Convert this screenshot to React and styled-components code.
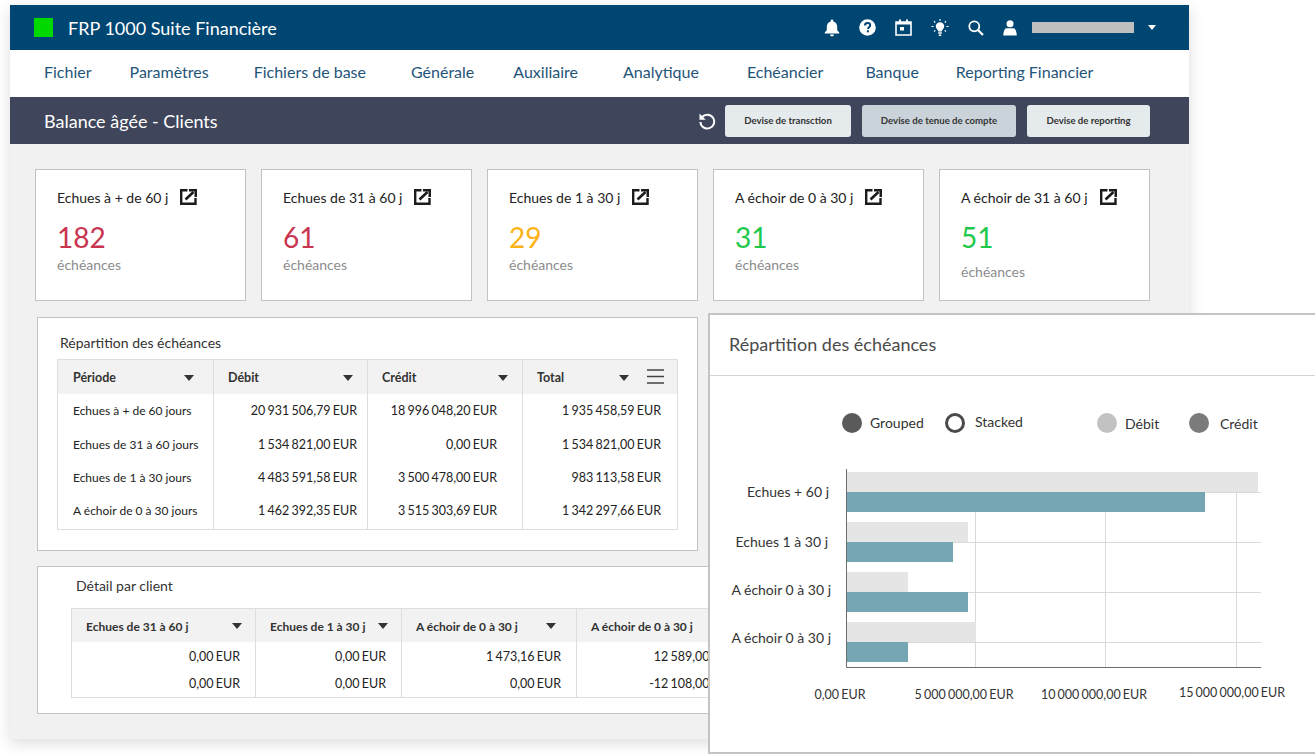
import styled, { createGlobalStyle } from 'styled-components';

const GlobalStyle = createGlobalStyle`
  html,
  body {
    margin: 0;
    padding: 0;
    background: #ffffff;
  }
  body {
    font-family: 'Lato', 'Liberation Sans', sans-serif;
    overflow: hidden;
  }
`;

const MENU = [
  ['Fichier', 38],
  ['Paramètres', 45],
  ['Fichiers de base', 45],
  ['Générale', 39],
  ['Auxiliaire', 45],
  ['Analytique', 48],
  ['Echéancier', 42],
  ['Banque', 37],
  ['Reporting Financier', 0],
];

const CARDS = [
  { title: 'Echues à + de 60 j', value: '182', color: '#c9344f' },
  { title: 'Echues de 31 à 60 j', value: '61', color: '#c9344f' },
  { title: 'Echues de 1 à 30 j', value: '29', color: '#fcb316' },
  { title: 'A échoir de 0 à 30 j', value: '31', color: '#1dc94a' },
  { title: 'A échoir de 31 à 60 j', value: '51', color: '#1dc94a', low: true },
];

const SUMMARY_ROWS = [
  ['Echues à + de 60 jours', '20 931 506,79 EUR', '18 996 048,20 EUR', '1 935 458,59 EUR'],
  ['Echues de 31 à 60 jours', '1 534 821,00 EUR', '0,00 EUR', '1 534 821,00 EUR'],
  ['Echues de 1 à 30 jours', '4 483 591,58 EUR', '3 500 478,00 EUR', '983 113,58 EUR'],
  ['A échoir de 0 à 30 jours', '1 462 392,35 EUR', '3 515 303,69 EUR', '1 342 297,66 EUR'],
];

const DETAIL_COLUMNS = [
  { label: 'Echues de 31 à 60 j', width: 184, end: 13 },
  { label: 'Echues de 1 à 30 j', width: 146, end: 13 },
  { label: 'A échoir de 0 à 30 j', width: 175, end: 20 },
  { label: 'A échoir de 0 à 30 j', width: 175, end: 20 },
];

const DETAIL_ROWS = [
  ['0,00 EUR', '0,00 EUR', '1 473,16 EUR', '12 589,00 EUR'],
  ['0,00 EUR', '0,00 EUR', '0,00 EUR', '-12 108,00 EUR'],
];

const BARS = [
  { label: 'Echues + 60 j', labelX: 829, labelY: 497, y: 472, debit: 411, credit: 358 },
  { label: 'Echues 1 à 30 j', labelX: 828, labelY: 547, y: 522, debit: 121, credit: 106 },
  { label: 'A échoir 0 à 30 j', labelX: 831, labelY: 595, y: 572, debit: 61, credit: 121 },
  { label: 'A échoir 0 à 30 j', labelX: 831, labelY: 643, y: 622, debit: 129, credit: 61 },
];

const TICKS = [
  { x: 975, label: '5 000 000,00 EUR', labelX: 964, labelY: 699 },
  { x: 1105, label: '10 000 000,00 EUR', labelX: 1094, labelY: 699 },
  { x: 1236, label: '15 000 000,00 EUR', labelX: 1232, labelY: 697 },
];

const Caret = () => (
  <svg width="10" height="6" viewBox="0 0 10 6">
    <path d="M0 0h10L5 6z" fill="currentColor" />
  </svg>
);

const BellIcon = () => (
  <svg width="16" height="18" viewBox="0 0 16 18">
    <path d="M8 .5c.8 0 1.300.6 1.300 1.400v.5c2.400.6 3.900 2.600 3.900 5.200v3.600l2 2.300v1H.8v-1l2-2.300V7.600c0-2.600 1.500-4.600 3.900-5.200v-.5C6.700 1.100 7.200.5 8 .5z" fill="#fff" />
    <path d="M6 15.600h4c0 1.100-.9 1.900-2 1.900s-2-.8-2-1.900z" fill="#fff" />
  </svg>
);

const HelpIcon = () => (
  <svg width="17" height="17" viewBox="0 0 17 17">
    <circle cx="8.500" cy="8.500" r="8.300" fill="#fff" />
    <path d="M5.900 6.500c0-1.500 1.100-2.500 2.700-2.500s2.600.9 2.600 2.200c0 1.900-2.200 2-2.200 3.700" fill="none" stroke="#004672" strokeWidth="1.900" />
    <rect x="7.900" y="11.300" width="2" height="2" fill="#004672" />
  </svg>
);

const CalendarIcon = () => (
  <svg width="17" height="17" viewBox="0 0 17 17">
    <path d="M1 3h15v13H1z" fill="none" stroke="#fff" strokeWidth="1.600" />
    <path d="M1 3h15v2.500H1z" fill="#fff" />
    <path d="M4 .5h2v3H4zM11 .5h2v3h-2z" fill="#fff" />
    <rect x="5" y="8" width="4" height="3.500" fill="#fff" />
  </svg>
);

const BulbIcon = () => (
  <svg width="18" height="18" viewBox="0 0 18 18">
    <path d="M9 3.200c-2.500 0-4.200 1.800-4.200 4 0 1.700 1 2.600 1.900 3.800.4.500.5 1 .5 1.500h3.600c0-.5.100-1 .5-1.500.9-1.200 1.900-2.100 1.900-3.800 0-2.200-1.700-4-4.200-4z" fill="#fff" />
    <path d="M7.200 13.300h3.600v1.500H7.200zM7.800 15.400h2.400v1.500H7.800z" fill="#fff" />
    <path d="M9 0v1.900M2.900 2.200l1.400 1.300M15.100 2.200l-1.400 1.300M.5 7.500h2M15.500 7.500h2M3 12.500l1.400-1.100M15 12.500l-1.400-1.100" stroke="#fff" strokeWidth="1.100" fill="none" />
  </svg>
);

const SearchIcon = () => (
  <svg width="16" height="16" viewBox="0 0 16 16">
    <circle cx="6.300" cy="6.300" r="5" fill="none" stroke="#fff" strokeWidth="1.800" />
    <path d="M10 10l5 5" stroke="#fff" strokeWidth="2.200" fill="none" />
  </svg>
);

const UserIcon = () => (
  <svg width="14" height="16" viewBox="0 0 14 16">
    <circle cx="7" cy="3.700" r="3.500" fill="#fff" />
    <path d="M3.600 8.300h6.800c1.700 0 3 2.400 3.400 7.200H.2C.6 10.700 1.900 8.300 3.600 8.300z" fill="#fff" />
  </svg>
);

const ExternalIcon = () => (
  <svg width="17" height="16" viewBox="0 0 17 16">
    <path d="M7.500 1.200H1.200v13.600h14.300V9" fill="none" stroke="#1c1c1c" strokeWidth="2.400" />
    <path d="M5.500 10.500L13.500 3" fill="none" stroke="#1c1c1c" strokeWidth="2.600" />
    <path d="M9 0h8v8h-2.500V2.500H9z" fill="#1c1c1c" />
  </svg>
);

const RefreshIcon = () => (
  <svg width="18" height="18" viewBox="0 0 18 18">
    <path d="M4 5.200A6.900 6.900 0 1 1 2.400 10" fill="none" stroke="#fff" strokeWidth="2" />
    <path d="M1.500 1.500v6.200h6.200z" fill="#fff" />
  </svg>
);

const MenuLines = () => (
  <svg width="17" height="15" viewBox="0 0 17 15">
    <path d="M0 1h17M0 7.500h17M0 14h17" stroke="#444" strokeWidth="1.600" fill="none" />
  </svg>
);

const App = () => (
  <Page>
    <GlobalStyle />
    <Window>
      <TopBar>
        <Brand>
          <BrandMark />
          <BrandName>FRP 1000 Suite Financière</BrandName>
        </Brand>
        <Tools>
          <BellIcon />
          <HelpIcon />
          <CalendarIcon />
          <BulbIcon />
          <SearchIcon />
          <UserIcon />
          <UserName />
          <UserCaret>
            <Caret />
          </UserCaret>
        </Tools>
      </TopBar>

      <MenuBar>
        {MENU.map(([label, gap]) => (
          <MenuItem key={label} $gap={gap}>
            {label}
          </MenuItem>
        ))}
      </MenuBar>

      <TitleBar>
        <PageTitle>Balance âgée - Clients</PageTitle>
        <Actions>
          <RefreshIcon />
          <CurrencyButton $width={126}>Devise de transction</CurrencyButton>
          <CurrencyButton $width={154} $active>
            Devise de tenue de compte
          </CurrencyButton>
          <CurrencyButton $width={123}>Devise de reporting</CurrencyButton>
        </Actions>
      </TitleBar>

      <Content>
        <CardRow>
          {CARDS.map((card) => (
            <Card key={card.title}>
              <CardTitle>
                {card.title}
                <ExternalIcon />
              </CardTitle>
              <CardValue $color={card.color}>{card.value}</CardValue>
              <CardUnit $low={card.low}>échéances</CardUnit>
            </Card>
          ))}
        </CardRow>

        <SummaryPanel>
          <SummaryTitle>Répartition des échéances</SummaryTitle>
          <SummaryTable>
            <thead>
              <tr>
                <SummaryHead $width={156}>
                  <HeadInner $start={15} $end={19}>
                    Période
                    <Caret />
                  </HeadInner>
                </SummaryHead>
                <SummaryHead $width={154}>
                  <HeadInner $end={14}>
                    Débit
                    <Caret />
                  </HeadInner>
                </SummaryHead>
                <SummaryHead $width={155}>
                  <HeadInner $end={14}>
                    Crédit
                    <Caret />
                  </HeadInner>
                </SummaryHead>
                <SummaryHead $width={155}>
                  <HeadInner $end={13}>
                    Total
                    <Caret />
                    <MenuButton>
                      <MenuLines />
                    </MenuButton>
                  </HeadInner>
                </SummaryHead>
              </tr>
            </thead>
            <tbody>
              {SUMMARY_ROWS.map((row) => (
                <SummaryRow key={row[0]}>
                  <SummaryLabel>{row[0]}</SummaryLabel>
                  {row.slice(1).map((amount, i) => (
                    <SummaryAmount key={i}>{amount}</SummaryAmount>
                  ))}
                </SummaryRow>
              ))}
            </tbody>
          </SummaryTable>
        </SummaryPanel>

        <DetailPanel>
          <DetailTitle>Détail par client</DetailTitle>
          <DetailTable>
            <thead>
              <tr>
                {DETAIL_COLUMNS.map((column, i) => (
                  <DetailHead key={i} $width={column.width}>
                    <HeadInner $end={column.end}>
                      {column.label}
                      <Caret />
                    </HeadInner>
                  </DetailHead>
                ))}
              </tr>
            </thead>
            <tbody>
              {DETAIL_ROWS.map((row, r) => (
                <tr key={r}>
                  {row.map((amount, i) => (
                    <DetailAmount key={i}>{amount}</DetailAmount>
                  ))}
                </tr>
              ))}
            </tbody>
          </DetailTable>
        </DetailPanel>
      </Content>
    </Window>

    <ChartWindow>
      <ChartHeader>Répartition des échéances</ChartHeader>
      <ChartCanvas viewBox="710 376 605 377" width="605" height="377">
        <circle cx="852" cy="423" r="10" fill="#5a5a5a" />
        <ChartText x="870" y="428">Grouped</ChartText>
        <circle cx="955" cy="423" r="8.500" fill="#fff" stroke="#4a4a4a" strokeWidth="3" />
        <ChartText x="975" y="427">Stacked</ChartText>
        <circle cx="1107" cy="423" r="10" fill="#c2c2c2" />
        <ChartText x="1125" y="429">Débit</ChartText>
        <circle cx="1199" cy="423" r="10" fill="#7b7b7b" />
        <ChartText x="1220" y="429">Crédit</ChartText>

        {TICKS.map((tick) => (
          <line key={tick.x} x1={tick.x + 0.5} x2={tick.x + 0.5} y1="492" y2="667" stroke="#d9d9d9" />
        ))}
        {BARS.map((bar) => (
          <line key={bar.y} x1="846" x2="1261" y1={bar.y + 20.5} y2={bar.y + 20.5} stroke="#d9d9d9" />
        ))}
        {BARS.map((bar) => (
          <g key={bar.y}>
            <rect x="847" y={bar.y} width={bar.debit} height="20" fill="#e5e5e5" />
            <rect x="847" y={bar.y + 20} width={bar.credit} height="20" fill="#76a5b3" />
          </g>
        ))}
        <path d="M846.500 469v198.500H1261" fill="none" stroke="#6d6d6d" />

        {BARS.map((bar) => (
          <ChartText key={bar.y} x={bar.labelX} y={bar.labelY} textAnchor="end">
            {bar.label}
          </ChartText>
        ))}
        <AxisText x="840" y="699" textAnchor="middle">0,00 EUR</AxisText>
        {TICKS.map((tick) => (
          <AxisText key={tick.x} x={tick.labelX} y={tick.labelY} textAnchor="middle">
            {tick.label}
          </AxisText>
        ))}
      </ChartCanvas>
    </ChartWindow>
  </Page>
);

const Page = styled.div`
  position: relative;
  width: 1315px;
  height: 755px;
  padding: 5px 0 0 10px;
  box-sizing: border-box;
  overflow: hidden;
  background: #ffffff;
`;

const Window = styled.div`
  width: 1179px;
  height: 734px;
  display: flex;
  flex-direction: column;
  background: #f1f1f1;
  box-shadow: 0 4px 14px rgba(0, 0, 0, 0.14);
`;

const TopBar = styled.header`
  height: 45px;
  flex: none;
  display: flex;
  align-items: center;
  justify-content: space-between;
  padding: 0 33px 0 24px;
  background: #004672;
`;

const Brand = styled.div`
  display: flex;
  align-items: center;
  gap: 15px;
`;

const BrandMark = styled.span`
  width: 19px;
  height: 19px;
  background: #00d900;
`;

const BrandName = styled.span`
  color: #ffffff;
  font-size: 18px;
`;

const Tools = styled.div`
  display: flex;
  align-items: center;
  gap: 19px;
`;

const UserName = styled.span`
  width: 102px;
  height: 11px;
  margin-left: -4px;
  background: #bfbfbf;
`;

const UserCaret = styled.span`
  display: flex;
  margin-left: -5px;
  color: #ffffff;
  svg {
    width: 8px;
    height: 5px;
  }
`;

const MenuBar = styled.nav`
  height: 47px;
  box-sizing: border-box;
  flex: none;
  display: flex;
  align-items: center;
  padding: 0 0 5px 34px;
  background: #ffffff;
`;

const MenuItem = styled.span`
  margin-right: ${(props) => props.$gap}px;
  color: #1f5479;
  font-size: 16px;
`;

const TitleBar = styled.div`
  height: 47px;
  box-sizing: border-box;
  flex: none;
  display: flex;
  align-items: center;
  justify-content: space-between;
  padding: 0 39px 0 34px;
  background: #3f465b;
`;

const PageTitle = styled.h1`
  margin: 0;
  color: #ffffff;
  font-size: 18px;
  font-weight: 400;
`;

const Actions = styled.div`
  display: flex;
  align-items: center;
  gap: 11px;
  svg {
    margin-right: -2px;
  }
`;

const CurrencyButton = styled.button`
  width: ${(props) => props.$width}px;
  height: 32px;
  padding: 0;
  border: 0;
  border-radius: 3px;
  background: ${(props) => (props.$active ? '#cad3d9' : '#e5eaec')};
  color: #333333;
  font-family: inherit;
  font-size: 9.600px;
  font-weight: 700;
`;

const Content = styled.main`
  flex: 1;
  display: flex;
  flex-direction: column;
  padding: 25px 0 0 25px;
`;

const CardRow = styled.div`
  display: flex;
  gap: 15px;
`;

const Card = styled.article`
  width: 211px;
  height: 132px;
  box-sizing: border-box;
  padding: 18px 0 0 21px;
  border: 1px solid #c2c2c2;
  background: #ffffff;
`;

const CardTitle = styled.div`
  display: flex;
  align-items: center;
  gap: 12px;
  height: 18px;
  color: #222222;
  font-size: 14px;
  svg {
    flex: none;
  }
`;

const CardValue = styled.div`
  margin-top: 14px;
  color: ${(props) => props.$color};
  font-size: 28px;
  line-height: 34px;
`;

const CardUnit = styled.div`
  margin-top: ${(props) => (props.$low ? '9px' : '2px')};
  color: #8c8c8c;
  font-size: 14px;
  line-height: 17px;
`;

const SummaryPanel = styled.section`
  width: 661px;
  height: 234px;
  box-sizing: border-box;
  margin: 16px 0 0 2px;
  padding: 16px 19px 0;
  border: 1px solid #c2c2c2;
  background: #ffffff;
`;

const SummaryTitle = styled.h2`
  margin: 0 0 8px 3px;
  color: #333333;
  font-size: 14px;
  font-weight: 400;
  line-height: 17px;
`;

const SummaryTable = styled.table`
  width: 620px;
  table-layout: fixed;
  border-collapse: collapse;
  border: 1px solid #dedede;
  font-size: 12.500px;
  color: #222222;
`;

const SummaryHead = styled.th`
  width: ${(props) => props.$width}px;
  height: 34px;
  box-sizing: border-box;
  padding: 2px 0 0;
  border-right: 1px solid #dedede;
  background: #f2f2f2;
  color: #333333;
  font-weight: 700;
  text-align: left;
  &:last-child {
    border-right: 0;
  }
`;

const HeadInner = styled.div`
  display: flex;
  align-items: center;
  padding: 0 ${(props) => props.$end}px 0 ${(props) => props.$start || 14}px;
  white-space: nowrap;
  svg:first-of-type {
    margin-left: auto;
    flex: none;
  }
`;

const MenuButton = styled.span`
  display: flex;
  flex: none;
  margin: -2px 0 0 18px;
  svg:first-of-type {
    margin-left: 0;
  }
`;

const SummaryRow = styled.tr`
  &:last-child td {
    height: 35px;
    padding-bottom: 2px;
  }
`;

const SummaryLabel = styled.td`
  height: 33.500px;
  box-sizing: border-box;
  padding: 1px 0 0 15px;
  border-right: 1px solid #dedede;
  font-size: 12px;
  white-space: nowrap;
`;

const SummaryAmount = styled.td`
  box-sizing: border-box;
  padding: 1px 10px 0 0;
  border-right: 1px solid #dedede;
  font-size: 12.500px;
  text-align: right;
  white-space: nowrap;
  word-spacing: -1px;
  &:nth-child(3) {
    padding-right: 25px;
  }
  &:last-child {
    padding-right: 16px;
    border-right: 0;
  }
`;

const DetailPanel = styled.section`
  width: 1000px;
  height: 148px;
  box-sizing: border-box;
  margin: 15px 0 0 2px;
  padding: 10px 0 0 33px;
  border: 1px solid #c2c2c2;
  background: #ffffff;
`;

const DetailTitle = styled.h2`
  margin: 0 0 14px 5px;
  color: #333333;
  font-size: 14px;
  font-weight: 400;
  line-height: 17px;
`;

const DetailTable = styled.table`
  width: 680px;
  table-layout: fixed;
  border-collapse: collapse;
  border: 1px solid #dedede;
  color: #222222;
  font-size: 12.500px;
`;

const DetailHead = styled.th`
  width: ${(props) => props.$width}px;
  height: 33px;
  box-sizing: border-box;
  padding: 2px 0 0;
  border-right: 1px solid #dedede;
  background: #f2f2f2;
  color: #333333;
  font-weight: 700;
  text-align: left;
  font-size: 12px;
`;

const DetailAmount = styled.td`
  height: 28px;
  box-sizing: border-box;
  padding: 1px 15px 0 0;
  border-right: 1px solid #dedede;
  text-align: right;
  white-space: nowrap;
  word-spacing: -1px;
`;

const ChartWindow = styled.aside`
  position: absolute;
  left: 708px;
  top: 313px;
  width: 607px;
  height: 441px;
  box-sizing: border-box;
  border: 2px solid #c4c4c4;
  border-right: 0;
  background: #ffffff;
  overflow: hidden;
`;

const ChartHeader = styled.h2`
  height: 61px;
  box-sizing: border-box;
  margin: 0;
  padding-left: 19px;
  border-bottom: 1px solid #d4d4d4;
  color: #4a4a4a;
  font-size: 18px;
  font-weight: 400;
  line-height: 59px;
`;

const ChartCanvas = styled.svg`
  display: block;
`;

const ChartText = styled.text`
  fill: #333333;
  font-size: 14px;
`;

const AxisText = styled.text`
  fill: #333333;
  font-size: 12.500px;
  word-spacing: -1px;
`;

export default App;
